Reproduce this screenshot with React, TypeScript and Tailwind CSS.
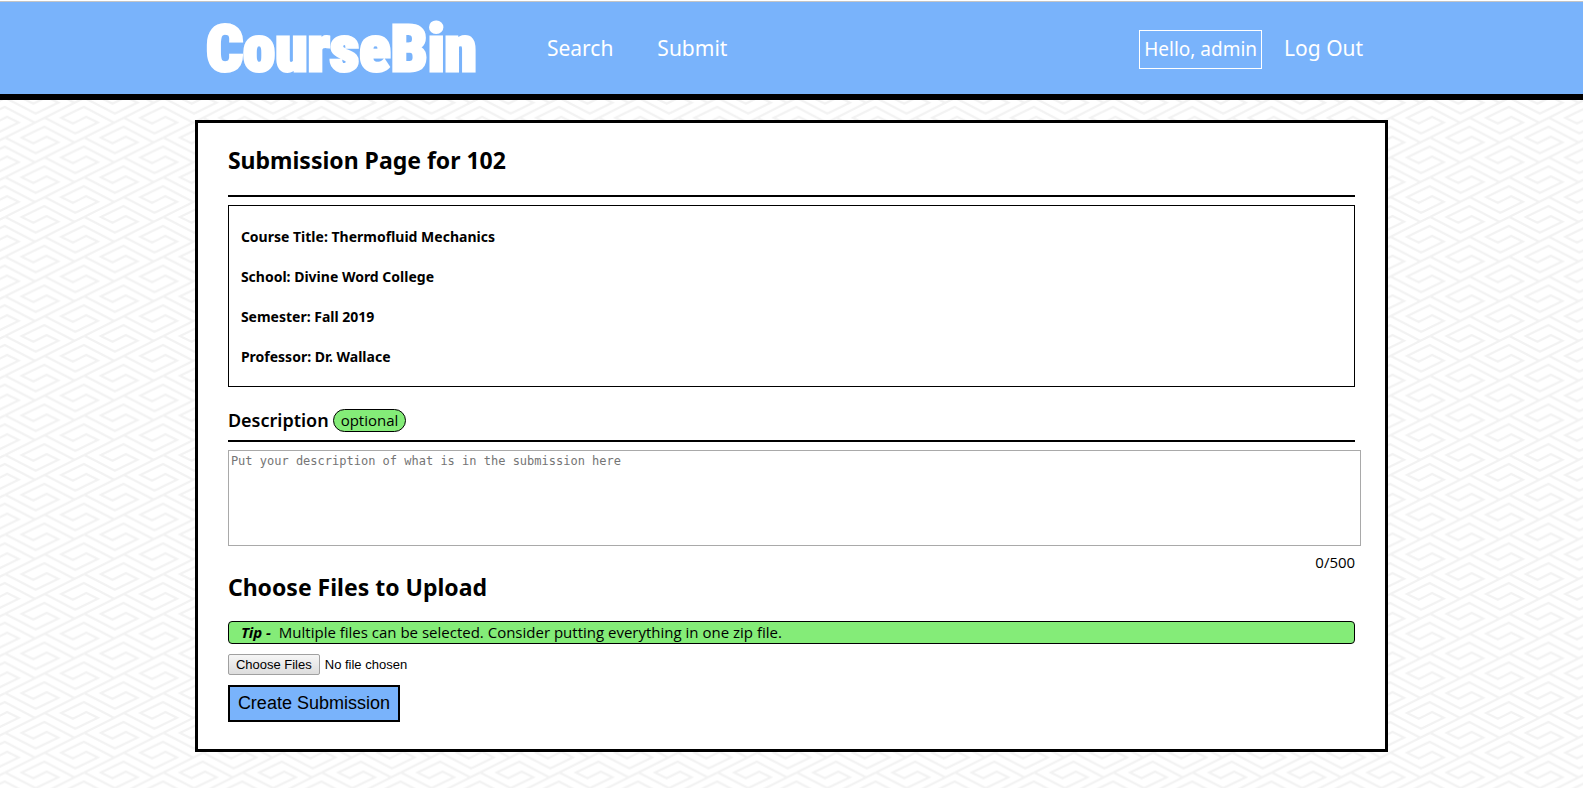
import { useState } from "react";

const MAX_LENGTH = 500;

const courseDetails = [
  { label: "Course Title", value: "Thermofluid Mechanics" },
  { label: "School", value: "Divine Word College" },
  { label: "Semester", value: "Fall 2019" },
  { label: "Professor", value: "Dr. Wallace" },
];

// One repeat of the interlocking meander: two hooks and a diagonal, redrawn
// around the tile so that the edges join.
const TILE_W = 237.5;
const TILE_H = 119.05;
const HOOK =
  "M16 143 L107 190 L175 157 L140 140 L100 160 L65 143 L133 110 L224 158";
const REPEATS = [-2, -1, 0, 1];

function MeanderBackground() {
  return (
    <svg aria-hidden="true" className="absolute inset-0 h-full w-full">
      <defs>
        <pattern
          id="meander"
          width={TILE_W}
          height={TILE_H}
          patternUnits="userSpaceOnUse"
          patternTransform="translate(0 90) scale(0.33333)"
        >
          <g fill="none" stroke="#f2f2f2" strokeWidth="6.5">
            {REPEATS.map((row) =>
              REPEATS.map((col) => (
                <g
                  key={`${row}:${col}`}
                  transform={`translate(${col * TILE_W} ${row * TILE_H})`}
                >
                  <path d={HOOK} />
                  <path
                    d={HOOK}
                    transform={`translate(${TILE_W / 2} ${-TILE_H / 2})`}
                  />
                  <path d={`M15 143 l${TILE_W} ${-TILE_H}`} />
                </g>
              )),
            )}
          </g>
        </pattern>
      </defs>
      <rect width="100%" height="100%" fill="url(#meander)" />
    </svg>
  );
}

function Header() {
  return (
    <div className="bg-white pt-px">
      <header className="border-t border-b-[6px] border-t-[#c4c4c4] border-b-black bg-[#79b3fb] text-white">
        <div className="mx-auto flex h-[92px] w-3/4 items-center px-2 pt-0.5">
          <a
            href="#"
            className="font-['Roboto_Condensed',sans-serif] text-[65px] leading-none font-black [-webkit-text-stroke:3px_white]"
          >
            CourseBin
          </a>
          <nav className="ml-12 flex text-[21px]">
            <a href="#search" className="px-[22px]">
              Search
            </a>
            <a href="#submit" className="px-[22px]">
              Submit
            </a>
          </nav>
          <div className="ml-auto flex items-center gap-[22px] pr-3.5">
            <span className="border border-white px-1 py-1 text-[19px] leading-[29px]">
              Hello, admin
            </span>
            <a href="#logout" className="text-[21px]">
              Log Out
            </a>
          </div>
        </div>
      </header>
    </div>
  );
}

export default function App() {
  const [description, setDescription] = useState("");

  return (
    <div className="relative min-h-screen bg-white pb-9 font-['Noto_Sans',sans-serif] text-black">
      <MeanderBackground />
      <div className="relative">
        <Header />
        <main className="mx-auto mt-5 box-content w-3/4 border-[3px] border-black bg-white">
          <form
            className="flex flex-col items-start px-[30px] pt-[19px] pb-[27px]"
            onSubmit={(event) => event.preventDefault()}
          >
            <h1 className="w-full border-b-2 border-black pb-[17px] text-[23px] leading-9 font-bold">
              Submission Page for 102
            </h1>

            <div className="mt-2 w-full border border-black px-3 pt-[11px] pb-[9px] text-[14px] leading-10 font-bold">
              {courseDetails.map((item) => (
                <p key={item.label}>
                  {item.label}: {item.value}
                </p>
              ))}
            </div>

            <div className="mt-[22px] flex w-full items-center gap-1 border-b-2 border-black pb-2">
              <label
                htmlFor="description"
                className="text-[18px] leading-[23px] font-semibold"
              >
                Description
              </label>
              <span className="rounded-xl border border-black bg-[#84ec78] px-[7px] font-['Open_Sans',sans-serif] text-[15px] leading-[21px]">
                optional
              </span>
            </div>

            <textarea
              id="description"
              value={description}
              maxLength={MAX_LENGTH}
              onChange={(event) => setDescription(event.target.value)}
              placeholder="Put your description of what is in the submission here"
              className="mt-2 block h-24 w-[calc(100%+6px)] resize-none border border-[#a9a9a9] bg-white px-0.5 py-0.5 font-['DejaVu_Sans_Mono',monospace] text-[12px] leading-4 placeholder:text-[#757575]"
            />
            <p className="mt-1 self-end font-['Open_Sans',sans-serif] text-[15px] leading-6">
              {description.length}/{MAX_LENGTH}
            </p>

            <h2 className="text-[23px] leading-[26px] font-bold">
              Choose Files to Upload
            </h2>
            <p className="mt-[21px] w-full rounded border border-black bg-[#84ec78] px-3 font-['Open_Sans',sans-serif] text-[15px] leading-[21px]">
              <strong className="mr-1 font-bold italic">Tip -</strong> Multiple
              files can be selected. Consider putting everything in one zip
              file.
            </p>

            <input
              type="file"
              multiple
              aria-label="Choose files"
              className="mt-2.5 h-[21px] font-['Liberation_Sans',sans-serif] text-[13px] leading-[15px] file:mr-[5px] file:h-[21px] file:rounded-[2px] file:border file:border-solid file:border-[#a0a0a0] file:bg-linear-to-b file:from-[#f6f6f6] file:to-[#dddddd] file:px-[7px]"
            />
            <button
              type="submit"
              className="mt-2.5 border-2 border-black bg-[#79b3fb] px-2 py-1 font-['Liberation_Sans',sans-serif] text-[18px] leading-[25px]"
            >
              Create Submission
            </button>
          </form>
        </main>
      </div>
    </div>
  );
}
